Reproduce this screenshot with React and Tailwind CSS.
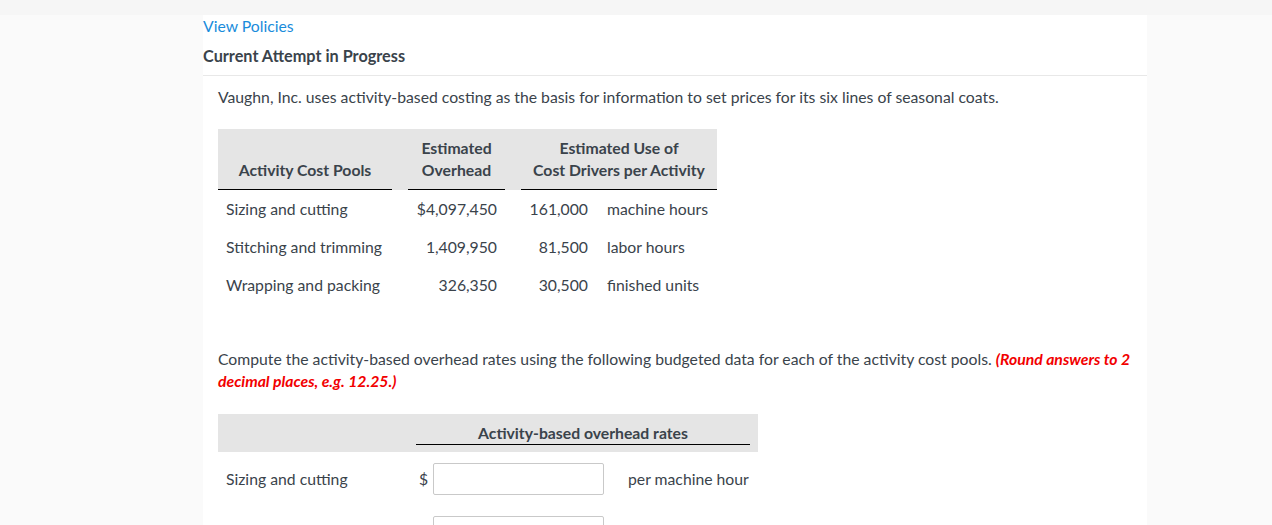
import React from 'react';

const font = { fontFamily: 'Lato, "Noto Sans", sans-serif' };

const costPools = [
  { name: 'Sizing and cutting', overhead: '$4,097,450', qty: '161,000', unit: 'machine hours' },
  { name: 'Stitching and trimming', overhead: '1,409,950', qty: '81,500', unit: 'labor hours' },
  { name: 'Wrapping and packing', overhead: '326,350', qty: '30,500', unit: 'finished units' },
];

const rateRows = [
  { name: 'Sizing and cutting', unit: 'per machine hour' },
  { name: 'Stitching and trimming', unit: 'per labor hour' },
  { name: 'Wrapping and packing', unit: 'per finished unit' },
];

function CostPoolTable() {
  return (
    <div className="mt-[21px] w-[499px]">
      {/* header */}
      <div className="grid grid-cols-[174px_97px_196px] gap-x-4 bg-[#e5e5e5] pt-2 font-bold">
        <div className="flex items-end justify-center border-b border-black pb-2 leading-[22px]">
          Activity Cost Pools
        </div>
        <div className="border-b border-black pb-2 text-center leading-[22px]">
          Estimated
          <br />
          Overhead
        </div>
        <div className="border-b border-black pb-2 text-center leading-[22px]">
          Estimated Use of
          <br />
          Cost Drivers per Activity
        </div>
      </div>
      {/* rows */}
      {costPools.map((row) => (
        <div key={row.name} className="grid h-[38px] grid-cols-[174px_97px_196px] items-center gap-x-4">
          <div className="pl-2">{row.name}</div>
          <div className="pr-2 text-right">{row.overhead}</div>
          <div className="grid grid-cols-[75px_1fr]">
            <div className="pr-2 text-right">{row.qty}</div>
            <div className="pl-[11px]">{row.unit}</div>
          </div>
        </div>
      ))}
    </div>
  );
}

function RatesTable() {
  return (
    <div className="mt-[22px] w-[540px]">
      <div className="grid grid-cols-[198px_1fr] bg-[#e5e5e5] pb-[7px] pr-2 pt-2">
        <div />
        <div className="border-b border-black text-center font-bold leading-[22px]">
          Activity-based overhead rates
        </div>
      </div>
      {rateRows.map((row) => (
        <div key={row.name} className="grid grid-cols-[198px_17px_171px_1fr] items-center pb-[10px] pt-[11px]">
          <div className="pl-2">{row.name}</div>
          <div className="pl-[3px]">$</div>
          <input
            type="text"
            className="h-8 rounded-[2px] border border-[#c9c9c9] bg-white px-2 outline-none"
          />
          <div className="pl-6">{row.unit}</div>
        </div>
      ))}
    </div>
  );
}

export default function App() {
  return (
    <div className="min-h-screen bg-[#fafafa] text-[15.75px] text-[#3a434b]" style={font}>
      <div className="h-[15px] bg-[#f6f6f6]" />
      <div className="ml-[203px] w-[944px] bg-white pb-10">
        <a href="#" className="block leading-[22px] text-[#1a8cdb]">
          View Policies
        </a>
        <div className="mt-2 border-b border-[#e8e8e8] pb-2 text-[16.25px] font-bold leading-[22px]">
          Current Attempt in Progress
        </div>

        <div className="px-[15px]">
          <p className="pt-[10px] leading-[22px]">
            Vaughn, Inc. uses activity-based costing as the basis for information to set prices for its six lines of seasonal coats.
          </p>

          <CostPoolTable />

          <p className="mt-[44px] leading-[22px]">
            Compute the activity-based overhead rates using the following budgeted data for each of the activity cost pools.{' '}
            <span className="font-bold italic text-[#f20000]">(Round answers to 2 decimal places, e.g. 12.25.)</span>
          </p>

          <RatesTable />
        </div>
      </div>
    </div>
  );
}
